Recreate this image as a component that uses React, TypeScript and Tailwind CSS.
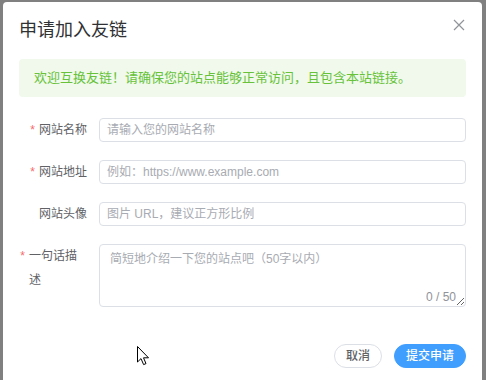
import React from "react";

const font = { fontFamily: '"Liberation Sans", "Noto Sans CJK SC", sans-serif' };

function Label({ text, required, wide }: { text: string; required?: boolean; wide?: boolean }) {
  return (
    <div className="flex w-[80px] shrink-0 justify-end pr-3 text-[12px] leading-[24px] text-[#606266]">
      {required && <span className="mr-1 text-[#f56c6c]">*</span>}
      <span className={wide ? "w-[58px] shrink-0" : ""}>{text}</span>
    </div>
  );
}

function Input({ placeholder }: { placeholder: string }) {
  return (
    <div className="flex h-[24px] flex-1 items-center rounded-[4px] border border-[#dcdfe6] bg-white px-[7px]">
      <input
        className="w-full bg-transparent text-[12px] text-[#606266] outline-none placeholder:text-[#a8abb2]"
        style={font}
        placeholder={placeholder}
      />
    </div>
  );
}

export default function App() {
  return (
    <div className="relative h-[380px] w-full overflow-hidden bg-[#808080] pl-[3px] pr-[4px] pt-[2px]" style={font}>
      <div className="relative h-full w-full rounded-t-[4px] bg-white px-4 pt-4">
        <div className="flex items-start justify-between">
          <div className="text-[18px] leading-[24px] text-[#303133]">申请加入友链</div>
          <svg className="mr-[1px] mt-[1px]" width="12" height="12" viewBox="0 0 12 12">
            <path d="M1 1 L11 11 M11 1 L1 11" stroke="#909399" strokeWidth="1.2" fill="none" />
          </svg>
        </div>

        <div className="mt-[17px] flex h-[38px] items-center rounded-[4px] bg-[#f0f9eb] px-[15px] text-[13px] text-[#67c23a]">
          欢迎互换友链！请确保您的站点能够正常访问，且包含本站链接。
        </div>

        <div className="mt-[21px] flex flex-col gap-[18px]">
          <div className="flex">
            <Label text="网站名称" required />
            <Input placeholder="请输入您的网站名称" />
          </div>
          <div className="flex">
            <Label text="网站地址" required />
            <Input placeholder="例如：https://www.example.com" />
          </div>
          <div className="flex">
            <Label text="网站头像" />
            <Input placeholder="图片 URL，建议正方形比例" />
          </div>
          <div className="flex">
            <Label text="一句话描述" required wide />
            <div className="relative flex-1">
              <textarea
                className="block h-[63px] w-full rounded-[4px] border border-[#dcdfe6] px-[10px] py-[5px] text-[12px] leading-[18px] text-[#606266] outline-none placeholder:text-[#a8abb2]"
                style={font}
                placeholder="简短地介绍一下您的站点吧（50字以内）"
              />
              <span className="absolute bottom-[3px] right-[10px] bg-white text-[12px] leading-[14px] text-[#909399]">
                0 / 50
              </span>
            </div>
          </div>
        </div>

        <div className="mt-[37px] flex justify-end gap-3">
          <button className="h-[24px] rounded-full border border-[#dcdfe6] bg-white px-[11px] text-[12px] font-medium text-[#606266]">
            取消
          </button>
          <button className="h-[24px] rounded-full border border-[#409eff] bg-[#409eff] px-[11px] text-[12px] font-medium text-white">
            提交申请
          </button>
        </div>

        <svg className="absolute left-[134px] top-[344px]" width="13" height="20" viewBox="0 0 13 20">
          <path
            d="M0.5 0.5 L0.5 16 L4 12.6 L6.6 18.6 L9 17.6 L6.5 11.8 L11.5 11.8 Z"
            fill="white"
            stroke="black"
            strokeWidth="1"
            strokeLinejoin="miter"
          />
        </svg>
      </div>
    </div>
  );
}
